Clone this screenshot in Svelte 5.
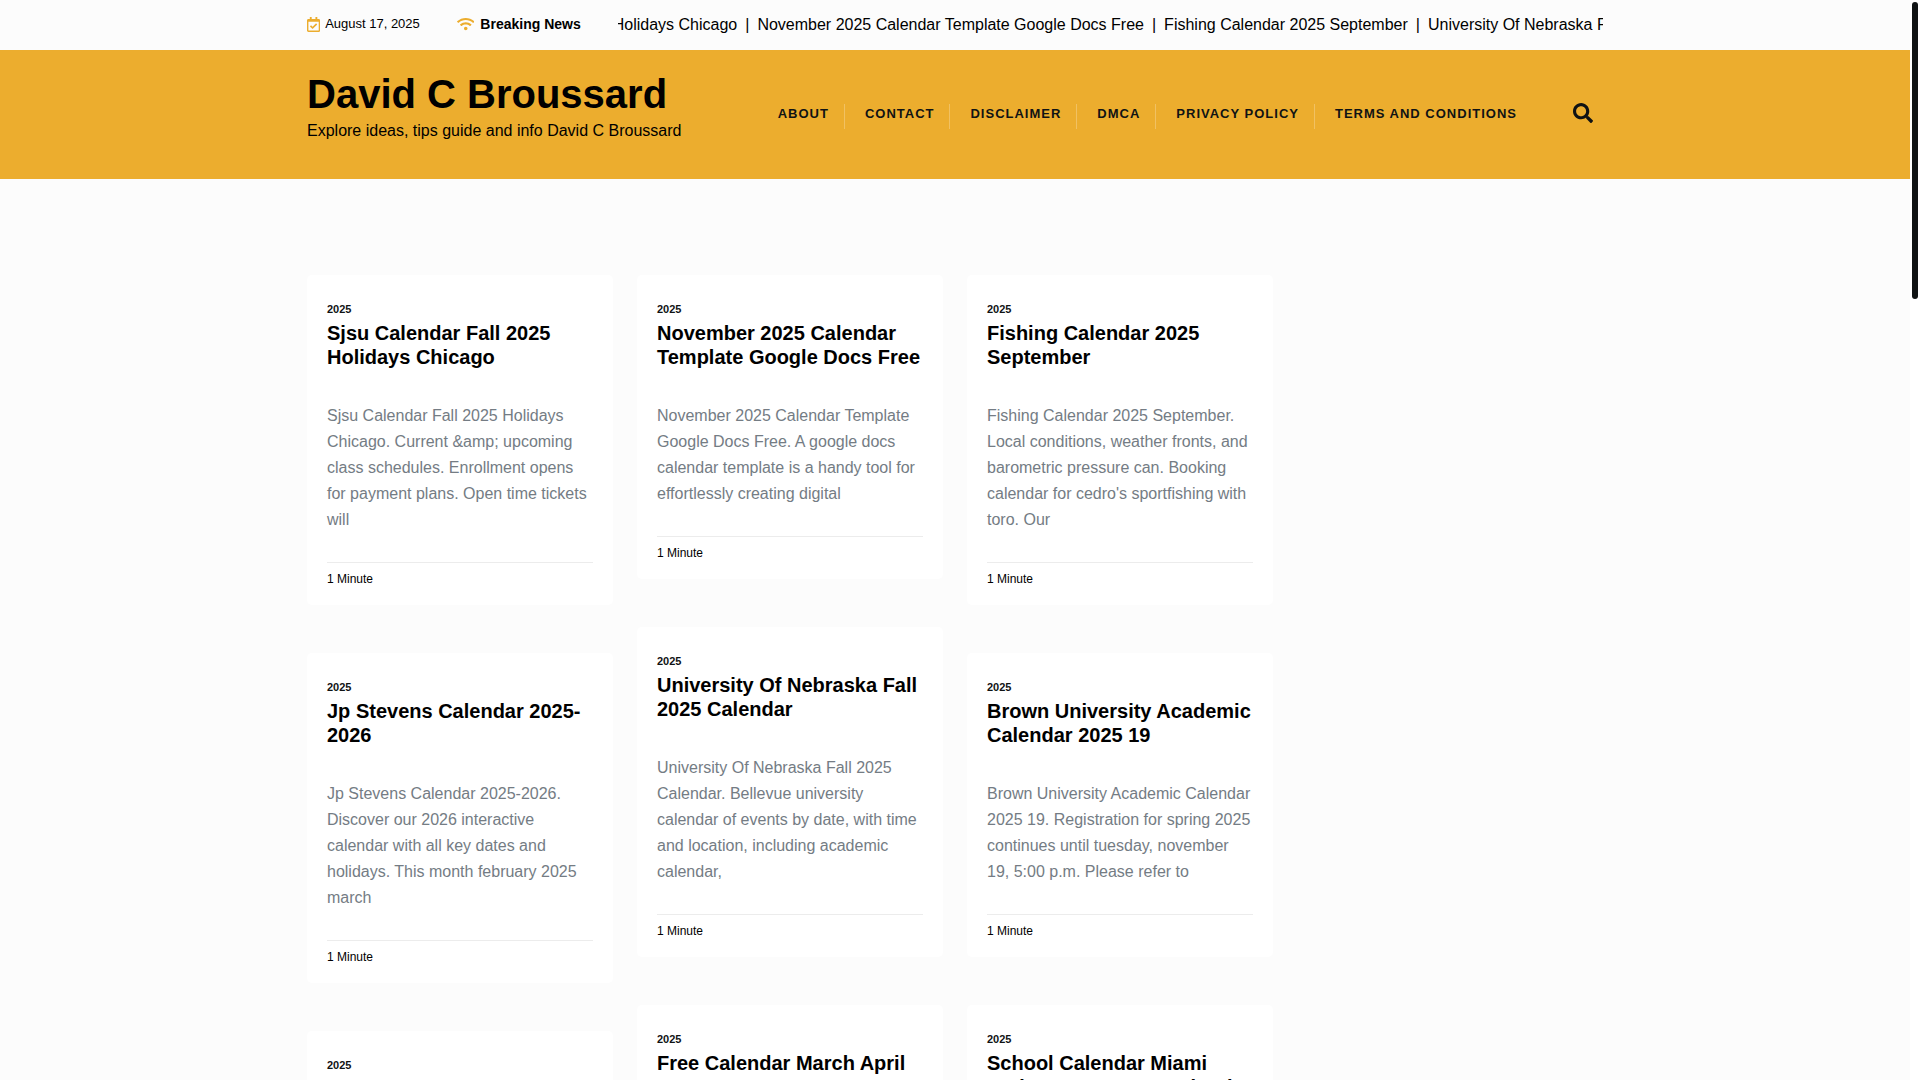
<script>
  const nav = ['About', 'Contact', 'Disclaimer', 'DMCA', 'Privacy Policy', 'Terms and Conditions'];

  const headlines = [
    'Holidays Chicago',
    'November 2025 Calendar Template Google Docs Free',
    'Fishing Calendar 2025 September',
    'University Of Nebraska Fall 2025 Calendar'
  ];

  // How far the news ticker has travelled, in pixels.
  let tickerOffset = 5;

  const columns = [
    [
      {
        title: 'Sjsu Calendar Fall 2025 Holidays Chicago',
        text: 'Sjsu Calendar Fall 2025 Holidays Chicago. Current &amp; upcoming class schedules. Enrollment opens for payment plans. Open time tickets will'
      },
      {
        title: 'Jp Stevens Calendar 2025-2026',
        text: 'Jp Stevens Calendar 2025-2026. Discover our 2026 interactive calendar with all key dates and holidays. This month february 2025 march'
      },
      { title: 'Calendar 2025', text: 'Calendar 2025.' }
    ],
    [
      {
        title: 'November 2025 Calendar Template Google Docs Free',
        text: 'November 2025 Calendar Template Google Docs Free. A google docs calendar template is a handy tool for effortlessly creating digital'
      },
      {
        title: 'University Of Nebraska Fall 2025 Calendar',
        text: 'University Of Nebraska Fall 2025 Calendar. Bellevue university calendar of events by date, with time and location, including academic calendar,'
      },
      { title: 'Free Calendar March April 2025', text: 'Free Calendar March April 2025.' }
    ],
    [
      {
        title: 'Fishing Calendar 2025 September',
        text: "Fishing Calendar 2025 September. Local conditions, weather fronts, and barometric pressure can. Booking calendar for cedro's sportfishing with toro. Our"
      },
      {
        title: 'Brown University Academic Calendar 2025 19',
        text: 'Brown University Academic Calendar 2025 19. Registration for spring 2025 continues until tuesday, november 19, 5:00 p.m. Please refer to'
      },
      {
        title: 'School Calendar Miami Dade County 2025 School',
        text: 'School Calendar Miami Dade County 2025 School.'
      }
    ]
  ];
</script>

<div class="window">
  <div class="page">
    <div class="topbar container">
      <div class="date">
        <svg viewBox="0 0 448 512" aria-hidden="true"><path d="M400 64h-48V12c0-6.627-5.373-12-12-12h-40c-6.627 0-12 5.373-12 12v52H160V12c0-6.627-5.373-12-12-12h-40c-6.627 0-12 5.373-12 12v52H48C21.49 64 0 85.49 0 112v352c0 26.51 21.49 48 48 48h352c26.51 0 48-21.49 48-48V112c0-26.51-21.49-48-48-48zm-6 400H54a6 6 0 0 1-6-6V160h352v298a6 6 0 0 1-6 6zm-52.849-200.65L198.842 404.519c-4.705 4.667-12.303 4.637-16.971-.068l-75.091-75.699c-4.667-4.705-4.637-12.303.068-16.971l22.719-22.536c4.705-4.667 12.303-4.637 16.97.069l44.104 44.461 111.072-110.181c4.705-4.667 12.303-4.637 16.971.068l22.536 22.718c4.667 4.705 4.636 12.303-.068 16.97z" /></svg>
        <time datetime="2025-08-17">August 17, 2025</time>
      </div>
      <div class="breaking">
        <svg viewBox="0 0 640 512" aria-hidden="true"><path d="M634.91 154.88C457.74-8.99 182.19-8.93 5.09 154.88c-6.66 6.16-6.79 16.59-.35 22.98l34.24 33.97c6.14 6.1 16.02 6.23 22.4.38 145.92-133.68 371.3-133.71 517.25 0 6.38 5.85 16.26 5.71 22.4-.38l34.24-33.97c6.43-6.39 6.3-16.82-.36-22.98zM320 352c-35.35 0-64 28.65-64 64s28.65 64 64 64 64-28.65 64-64-28.65-64-64-64zm202.67-83.59c-115.26-101.93-290.21-101.82-405.34 0-6.9 6.1-7.12 16.69-.57 23.15l34.44 33.99c6 5.92 15.66 6.32 22.05.8 83.95-72.57 209.74-72.41 293.49 0 6.39 5.52 16.05 5.13 22.05-.8l34.44-33.99c6.56-6.46 6.33-17.06-.56-23.15z" /></svg>
        <strong>Breaking News</strong>
      </div>
      <div class="ticker">
        <div class="track" style="transform: translateX({-tickerOffset}px)">
          {#each headlines as headline, i}
            {#if i > 0}<span>|</span>{/if}
            <a href="#news">{headline}</a>
          {/each}
        </div>
      </div>
    </div>

    <header>
      <div class="container masthead">
        <div class="brand">
          <h1><a href="#home">David C Broussard</a></h1>
          <p>Explore ideas, tips guide and info David C Broussard</p>
        </div>
        <nav>
          <ul>
            {#each nav as item}
              <li><a href="#page">{item}</a></li>
            {/each}
          </ul>
          <button type="button" aria-label="Search">
            <svg viewBox="0 0 512 512" aria-hidden="true"><path d="M505 442.7L405.3 343c-4.5-4.5-10.6-7-17-7H372c27.6-35.3 44-79.7 44-128C416 93.1 322.9 0 208 0S0 93.1 0 208s93.1 208 208 208c48.3 0 92.7-16.4 128-44v16.3c0 6.4 2.5 12.5 7 17l99.7 99.7c9.4 9.4 24.6 9.4 33.9 0l28.3-28.3c9.4-9.4 9.4-24.6.1-34zM208 336c-70.7 0-128-57.2-128-128 0-70.7 57.2-128 128-128 70.7 0 128 57.2 128 128 0 70.7-57.2 128-128 128z" /></svg>
          </button>
        </nav>
      </div>
    </header>

    <main>
      <div class="container">
        <div class="posts">
          {#each columns as column}
            <div class="column">
              {#each column as post}
                <article>
                  <a class="category" href="#category">2025</a>
                  <h2><a href="#post">{post.title}</a></h2>
                  <p>{post.text}</p>
                  <footer>1 Minute</footer>
                </article>
              {/each}
            </div>
          {/each}
        </div>
      </div>
    </main>
  </div>
  <div class="scrollbar" aria-hidden="true"><div class="thumb"></div></div>
</div>

<style>
  :global(body) {
    margin: 0;
    background: #fff;
    font-family: 'Liberation Sans', Arial, sans-serif;
    font-size: 16px;
    line-height: 26px;
    color: #000;
  }
  * {
    box-sizing: border-box;
  }
  h1,
  h2,
  p,
  ul {
    margin: 0;
    padding: 0;
  }
  a {
    color: inherit;
    text-decoration: none;
  }
  svg {
    display: block;
    flex: none;
    fill: currentColor;
  }

  .window {
    display: flex;
    height: 100vh;
  }
  .page {
    flex: 1;
    min-width: 0;
    overflow-y: auto;
    scrollbar-width: none;
    background: #fcfcfc;
  }
  .scrollbar {
    width: 10px;
    padding: 2px;
  }
  .thumb {
    width: 6px;
    height: 27.6%;
    border-radius: 3px;
    background: #101314;
  }
  .container {
    width: 100%;
    max-width: 1320px;
    margin: 0 auto;
    padding: 0 12px;
  }

  .topbar {
    display: flex;
    align-items: center;
    height: 50px;
  }
  .date,
  .breaking {
    display: flex;
    align-items: center;
    flex: none;
    padding-bottom: 2px;
    white-space: nowrap;
  }
  .date {
    gap: 5px;
    margin-right: 37px;
    font-size: 13px;
  }
  .date svg {
    height: 15px;
    color: #ecad2e;
  }
  .breaking {
    gap: 6px;
    margin-right: 37px;
    font-size: 14px;
  }
  .breaking svg {
    height: 14px;
    color: #ecad2e;
  }
  .ticker {
    flex: 1;
    min-width: 0;
    overflow: hidden;
  }
  .track {
    display: flex;
    gap: 8px;
    width: max-content;
    white-space: nowrap;
  }

  header {
    background: #ecad2e;
  }
  .masthead {
    display: flex;
    justify-content: space-between;
    padding-top: 20px;
    padding-bottom: 35px;
  }
  h1 {
    font-size: 40px;
    line-height: 48px;
  }
  nav {
    display: flex;
    align-items: flex-start;
    padding-top: 31px;
    padding-right: 10px;
    color: #101314;
  }
  nav ul {
    display: flex;
    list-style: none;
    font-size: 13px;
    font-weight: 700;
    line-height: 26px;
    letter-spacing: 1px;
    text-transform: uppercase;
  }
  nav li {
    display: flex;
    white-space: nowrap;
  }
  nav li:not(:last-child)::after {
    content: '';
    width: 1px;
    height: 25px;
    margin: 3px 20px 0 15px;
    background: rgba(255, 255, 255, 0.25);
  }
  button {
    margin: 2px 0 0 56px;
    padding: 0;
    border: 0;
    background: none;
    color: inherit;
    cursor: pointer;
  }
  button svg {
    width: 20px;
    height: 20px;
  }

  main {
    padding-top: 96px;
  }
  .posts {
    display: grid;
    grid-template-columns: repeat(3, 1fr);
    gap: 24px;
    align-items: start;
    width: 75%;
    padding-right: 6px;
  }
  .column {
    display: grid;
    gap: 48px;
  }
  article {
    padding: 24px 20px 13px;
    border-radius: 5px;
    background: #fff;
  }
  .category {
    display: block;
    margin-bottom: 2px;
    font-size: 11px;
    font-weight: 700;
    line-height: 20px;
    color: #101314;
  }
  h2 {
    min-height: 48px;
    margin-bottom: 34px;
    font-size: 20px;
    line-height: 24px;
  }
  article p {
    color: #747c84;
  }
  footer {
    margin-top: 29px;
    padding-top: 3px;
    border-top: 1px solid #ececec;
    font-size: 12px;
  }
</style>
